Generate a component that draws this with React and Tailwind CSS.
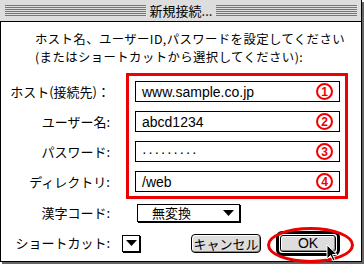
import React from "react";

const jp = { fontFamily: '"Noto Sans CJK JP", "Noto Sans", sans-serif' };
const latin = { fontFamily: '"Liberation Sans", Arial, sans-serif' };

function Stripes() {
  return (
    <div className="flex flex-1 flex-col gap-[1px]">
      {[0, 1, 2, 3, 4, 5].map((i) => (
        <div key={i} className="h-[1px] bg-[#777777]" />
      ))}
    </div>
  );
}

function Num({ n }) {
  return (
    <div
      className="flex h-[17px] w-[17px] items-center justify-center rounded-full border-2 border-[#ee0000] text-[12px] font-bold leading-none text-[#ee0000]"
      style={latin}
    >
      {n}
    </div>
  );
}

function Field({ value, n, dots }) {
  return (
    <div className="flex h-[21px] items-center justify-between border border-black bg-white pl-[6px] pr-[6px]">
      <span
        className={`text-[14px] leading-none text-black ${dots ? "tracking-[1.6px]" : ""}`}
        style={latin}
      >
        {value}
      </span>
      <Num n={n} />
    </div>
  );
}

function Triangle() {
  return (
    <svg width="11" height="6" viewBox="0 0 11 6">
      <path d="M0 0 H11 L5.5 6 Z" fill="#000" />
    </svg>
  );
}

export default function App() {
  const labels = ["ホスト(接続先)：", "ユーザー名:", "パスワード:", "ディレクトリ:"];

  return (
    <div className="h-[265px] w-[364px] bg-white" style={jp}>
      <div className="flex h-[262px] w-[362px] flex-col border-r border-b border-black shadow-[2px_2px_0_#666666]">
        {/* title bar */}
        <div className="flex h-[22px] shrink-0 items-center border-b border-black bg-[#dddddd] pl-[5px] pr-[4px]">
          <Stripes />
          <span className="px-[4px] text-[13px] leading-none text-black">新規接続...</span>
          <Stripes />
        </div>

        {/* body */}
        <div className="flex flex-1 flex-col border-l border-black bg-white">
          <div className="pl-[34px] pt-[8px] text-[12.4px] leading-[18px] tracking-[0.4px] text-black">
            <div>ホスト名、ユーザーID,パスワードを設定してください</div>
            <div>(またはショートカットから選択してください):</div>
          </div>

          <div className="mt-[7px] flex">
            <div className="flex w-[109px] flex-col gap-[9px] pt-[8px] text-right">
              {labels.map((l) => (
                <div key={l} className="flex h-[21px] items-center justify-end text-[13px] text-black">
                  {l}
                </div>
              ))}
            </div>
            <div className="ml-[16px] flex w-[222px] flex-col gap-[9px] border-[3px] border-[#ee0000] pt-[5px] pb-[4px] pl-[6px] pr-[5px]">
              <Field value="www.sample.co.jp" n="1" />
              <Field value="abcd1234" n="2" />
              <Field value="·········" n="3" dots />
              <Field value="/web" n="4" />
            </div>
          </div>

          {/* kanji code */}
          <div className="mt-[4px] flex items-center">
            <div className="w-[109px] text-right text-[13px] text-black">漢字コード:</div>
            <div className="ml-[27px] flex h-[18px] w-[103px] items-center justify-between border border-black bg-white pl-[14px] pr-[5px] text-[13px] leading-none text-black shadow-[1px_1px_0_#000]">
              <span>無変換</span>
              <Triangle />
            </div>
          </div>

          {/* shortcut + buttons */}
          <div className="mt-[8px] flex items-center">
            <div className="w-[109px] text-right text-[13px] text-black">ショートカット:</div>
            <div className="ml-[12px] flex h-[17px] w-[18px] items-center justify-center border border-black bg-white shadow-[1px_1px_0_#000]">
              <Triangle />
            </div>
            <button className="ml-[51px] flex h-[19px] w-[70px] items-center justify-center rounded-[4px] border border-black bg-[#dddddd] text-[13px] leading-none text-black shadow-[inset_1px_1px_0_#ffffff,inset_-1px_-1px_0_#888888]">
              キャンセル
            </button>
            <div className="relative ml-[15px] flex h-[25px] w-[64px] items-center justify-center rounded-[6px] border-[3px] border-black">
              <button
                className="flex h-[17px] w-[56px] items-center justify-center rounded-[3px] border border-black bg-[#dddddd] text-[14px] leading-none text-black shadow-[inset_1px_1px_0_#ffffff,inset_-1px_-1px_0_#888888]"
                style={latin}
              >
                OK
              </button>
              <div className="pointer-events-none absolute left-[-12px] top-[-7px] h-[36px] w-[87px] rounded-[50%] border-[3px] border-[#ee0000]" />
              <svg
                className="pointer-events-none absolute left-[47px] top-[10px]"
                width="12"
                height="19"
                viewBox="0 0 12 19"
              >
                <path
                  d="M1 1 L1 15 L4.5 11.5 L7 17 L9 16 L6.5 10.5 L11 10.5 Z"
                  fill="#000"
                  stroke="#fff"
                  strokeWidth="1"
                />
              </svg>
            </div>
          </div>
        </div>
      </div>
    </div>
  );
}
